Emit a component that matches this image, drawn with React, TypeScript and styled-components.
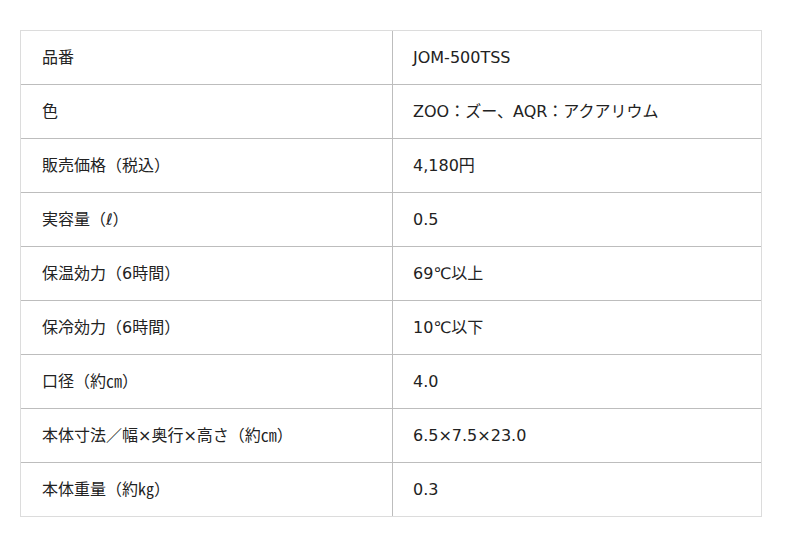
import React from "react";
import styled, { createGlobalStyle } from "styled-components";

const Global = createGlobalStyle`
  html, body { margin: 0; padding: 0; background: #fff; }
  body { font-family: "DejaVu Sans", "Noto Sans CJK JP", sans-serif; color: #222; }
`;

const Page = styled.div`
  padding: 30px 38px 30px 20px;
`;

const Table = styled.div`
  width: 742px;
  box-sizing: border-box;
  border: 1px solid #dcdcdc;
  display: grid;
  grid-template-columns: 372px 1fr;
`;

const Cell = styled.div<{ $left?: boolean; $last?: boolean }>`
  height: ${(p) => (p.$last ? "53px" : "54px")};
  box-sizing: border-box;
  display: flex;
  align-items: center;
  padding-left: ${(p) => (p.$left ? "21px" : "20px")};
  font-size: 16px;
  line-height: 1;
  border-bottom: ${(p) => (p.$last ? "none" : "1px solid #bdbdbd")};
  border-right: ${(p) => (p.$left ? "1px solid #bdbdbd" : "none")};
`;

const rows: [string, string][] = [
  ["品番", "JOM-500TSS"],
  ["色", "ZOO：ズー、AQR：アクアリウム"],
  ["販売価格（税込）", "4,180円"],
  ["実容量（ℓ）", "0.5"],
  ["保温効力（6時間）", "69℃以上"],
  ["保冷効力（6時間）", "10℃以下"],
  ["口径（約㎝）", "4.0"],
  ["本体寸法／幅×奥行×高さ（約㎝）", "6.5×7.5×23.0"],
  ["本体重量（約㎏）", "0.3"],
];

export default function App() {
  return (
    <Page>
      <Global />
      <Table>
        {rows.map(([k, v], i) => (
          <React.Fragment key={k}>
            <Cell $left $last={i === rows.length - 1}>{k}</Cell>
            <Cell $last={i === rows.length - 1}>{v}</Cell>
          </React.Fragment>
        ))}
      </Table>
    </Page>
  );
}
